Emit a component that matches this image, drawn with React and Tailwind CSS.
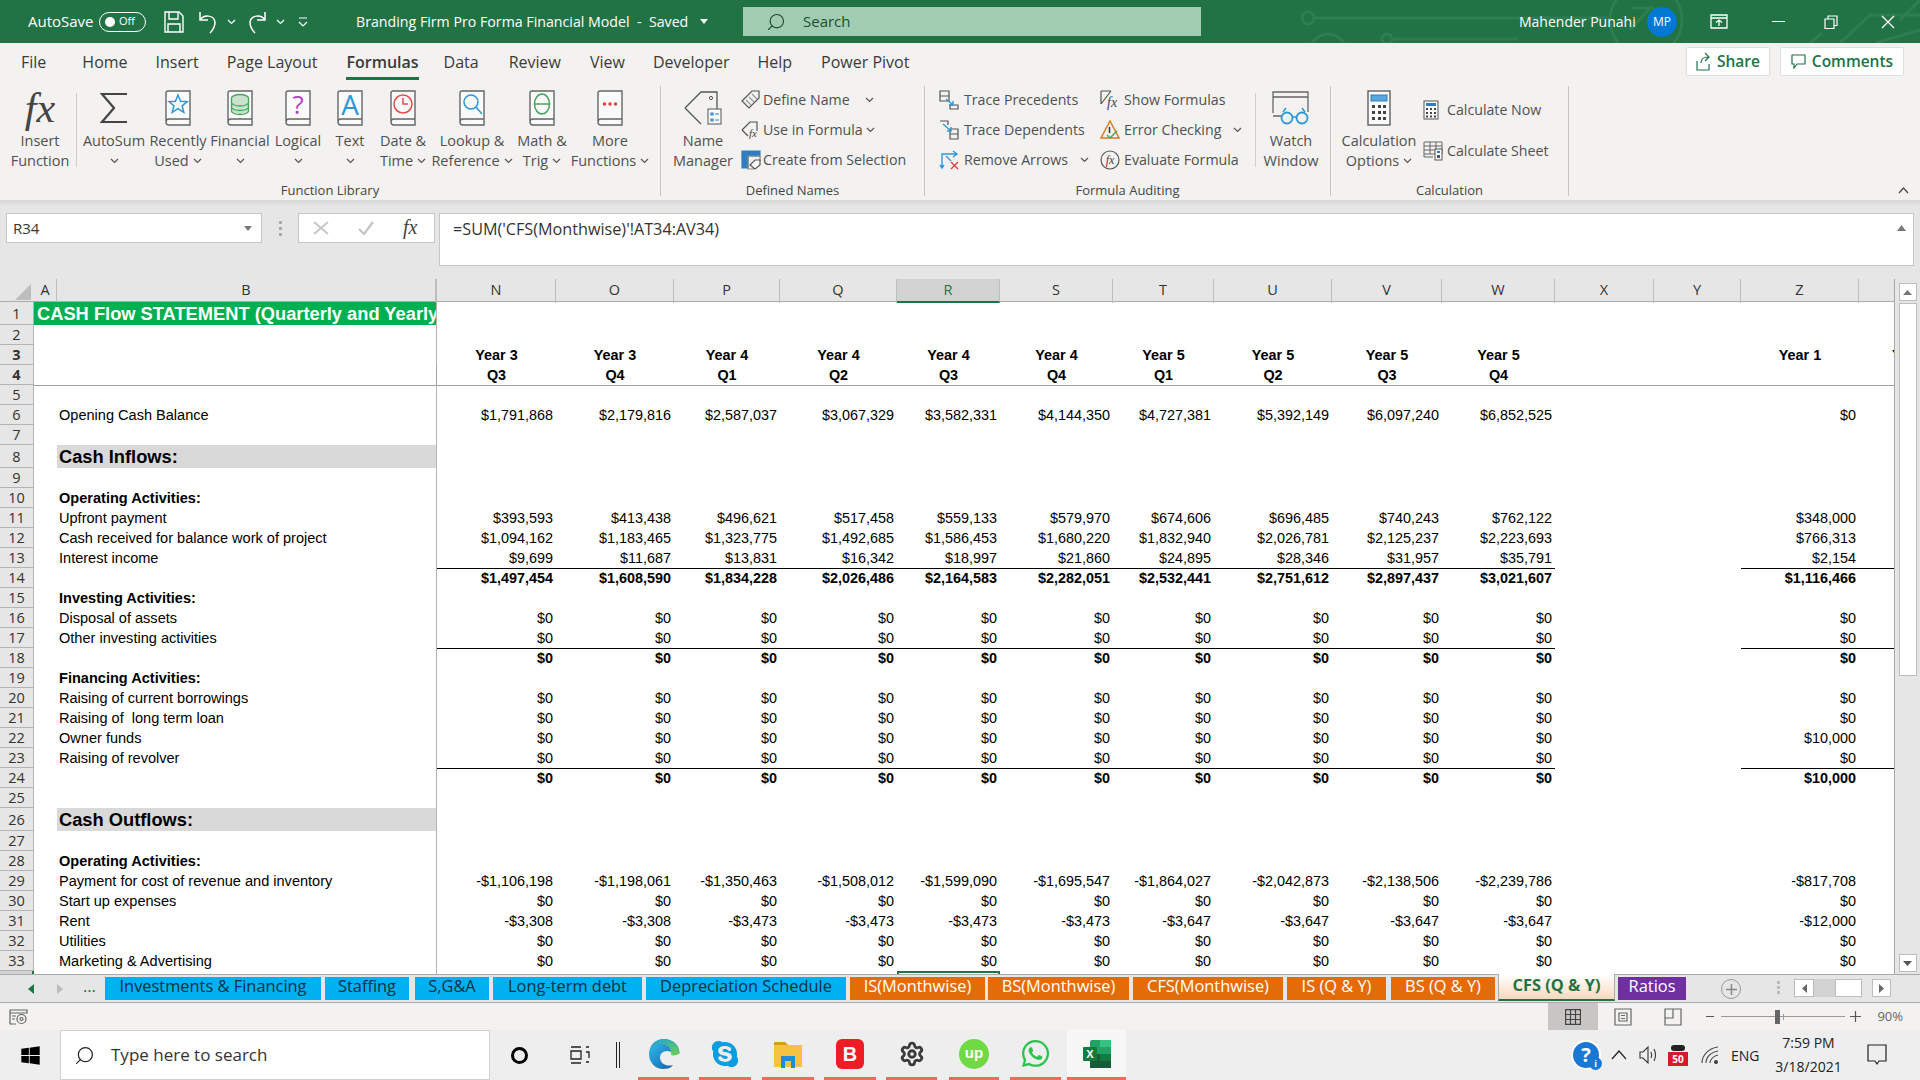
import React from "react";
import { FaWindows, FaWhatsapp, FaSkype } from "react-icons/fa";
import { Search, Settings } from "lucide-react";

const cols =
  "grid grid-cols-[34px_23px_380px_119px_118px_106px_117px_103px_113px_101px_118px_110px_113px_99px_87px_118px_36px]";

const Chev = ({ color = "#555" }) => (
  <svg width="9" height="6" viewBox="0 0 9 6" className="shrink-0">
    <path d="M1 1l3.5 3.5L8 1" fill="none" stroke={color} strokeWidth="1.2" />
  </svg>
);

const Book = ({ children }) => (
  <svg width="28" height="48" viewBox="0 -6 28 48" className="-my-[6px]">
    <path d="M2 31V3a2 2 0 0 1 2-2h22v28H5a3 3 0 0 0 0 6h21v-6" fill="#fafafa" stroke="#666" strokeWidth="1.4" />
    {children}
  </svg>
);

const Fx = ({ size = 36 }) => (
  <span className="font-['Liberation_Serif',serif] italic leading-none text-[#444]" style={{ fontSize: size }}>
    fx
  </span>
);

const LargeButton = ({ w, icon, line1, line2, chev }) => (
  <div className={`flex shrink-0 flex-col items-center ${w}`}>
    <div className="flex h-[36px] shrink-0 items-center justify-center">{icon}</div>
    <div className="mt-[5px] h-[20px] shrink-0 whitespace-nowrap leading-[20px]">{line1}</div>
    <div className="flex h-[20px] shrink-0 items-center gap-[4px] whitespace-nowrap leading-[20px]">
      {line2}
      {chev && <Chev />}
    </div>
  </div>
);

const SmallButton = ({ icon, iconW, text, textW, chev, h = "h-[30px]" }) => (
  <div className={`flex items-center whitespace-nowrap text-[14.2px] ${h}`}>
    <div className={`flex shrink-0 items-center ${iconW}`}>{icon}</div>
    <div className={textW}>{text}</div>
    {chev && <Chev />}
  </div>
);

const Group = ({ w, label, children }) => (
  <div className={`mt-[6px] flex h-[110px] shrink-0 flex-col border-r border-[#c8c6c4] ${w}`}>
    <div className="flex h-[98px] pt-[4px]">{children}</div>
    <div className="h-[12px] text-center text-[13px] leading-[12px] text-[#444]">{label}</div>
  </div>
);

const Sep = () => <div className="mt-[3px] h-[74px] w-[1px] shrink-0 bg-[#d0cecc]"></div>;

const TitleBar = () => (
  <div className="relative flex h-[43px] shrink-0 items-center overflow-hidden bg-[#217346] text-white">
    <svg width="640" height="43" viewBox="0 0 640 43" className="absolute left-[1280px] top-0" fill="none" stroke="#2d7f52" strokeWidth="3">
      <circle cx="28" cy="18" r="6" />
      <path d="M34 18H330" />
      <circle cx="107" cy="39" r="5" />
      <path d="M112 39H238" />
      <circle cx="48" cy="52" r="18" />
      <circle cx="366" cy="20" r="36" />
      <path d="M350 30l20-22M352 8h22" />
      <path d="M640 30L596 43M560 43l30-28h50M640 0l-20 20M530 43l12-10" />
    </svg>
    <span className="ml-[28px] w-[71px] text-[15px]">AutoSave</span>
    <div className="flex h-[20px] w-[47px] items-center rounded-full border border-white pl-[5px] pr-[5px]">
      <div className="h-[10px] w-[10px] rounded-full bg-white"></div>
      <span className="ml-[4px] text-[11px]">Off</span>
    </div>
    <svg width="20" height="22" viewBox="0 0 20 22" className="ml-[18px]" fill="none" stroke="white" strokeWidth="1.4">
      <path d="M1 1h14l4 4v16H1zM5 1v7h9V1M4 21v-8h12v8" />
    </svg>
    <svg width="20" height="24" viewBox="0 0 20 24" className="ml-[14px]" fill="none" stroke="white" strokeWidth="1.5">
      <path d="M2 2v8h8M2 10c4-6 14-5 15 2 0 5-2 8-5 11" />
    </svg>
    <div className="ml-[9px]"><Chev color="#fff" /></div>
    <svg width="20" height="24" viewBox="0 0 20 24" className="ml-[11px]" fill="none" stroke="white" strokeWidth="1.5">
      <path d="M18 2v8h-8M18 10C14 4 4 5 3 12c0 5 2 8 5 11" />
    </svg>
    <div className="ml-[9px]"><Chev color="#fff" /></div>
    <svg width="10" height="12" viewBox="0 0 10 12" className="ml-[13px]" fill="none" stroke="white" strokeWidth="1.2">
      <path d="M1 2h8M1 6l4 4 4-4" />
    </svg>
    <span className="ml-[48px] w-[338px] whitespace-nowrap text-[14.2px]">Branding Firm Pro Forma Financial Model&nbsp; -&nbsp; Saved</span>
    <svg width="8" height="5" viewBox="0 0 8 5" className="ml-[6px]"><path d="M0 0h8L4 5z" fill="white" /></svg>
    <div className="ml-[35px] flex h-[29px] w-[458px] items-center bg-[#a0cdb1] text-[#1e4d33]">
      <Search size={20} strokeWidth={1.4} className="ml-[23px] -scale-x-100" />
      <span className="ml-[17px] text-[15px]">Search</span>
    </div>
    <span className="relative ml-[318px] w-[128px] whitespace-nowrap text-[14px]">Mahender Punahi</span>
    <div className="relative flex h-[30px] w-[30px] items-center justify-center rounded-full bg-[#0078d4] text-[12px]">MP</div>
    <svg width="18" height="15" viewBox="0 0 18 15" className="relative ml-[33px]" fill="none" stroke="white" strokeWidth="1.3">
      <path d="M1 1h16v13H1zM1 4h16M9 12V6M6 8.5L9 6l3 2.5" />
    </svg>
    <div className="relative ml-[44px] h-[1.5px] w-[13px] bg-white"></div>
    <svg width="14" height="14" viewBox="0 0 14 14" className="relative ml-[39px]" fill="none" stroke="white" strokeWidth="1.2">
      <path d="M1 4h9v9.5H1zM4 4V1h9v9.5h-3" />
    </svg>
    <svg width="14" height="14" viewBox="0 0 14 14" className="relative ml-[43px]" fill="none" stroke="white" strokeWidth="1.3">
      <path d="M1 1l12 12M13 1L1 13" />
    </svg>
  </div>
);

const tabs = [
  ["File", "ml-[21px]"],
  ["Home", "ml-[36px]"],
  ["Insert", "ml-[28px]"],
  ["Page Layout", "ml-[28px]"],
  ["Data", "ml-[25px]"],
  ["Review", "ml-[30px]"],
  ["View", "ml-[29px]"],
  ["Developer", "ml-[28px]"],
  ["Help", "ml-[28px]"],
  ["Power Pivot", "ml-[29px]"],
];

const RibbonTabs = () => (
  <div className="flex h-[37px] shrink-0 items-center bg-[#f3f2f1] text-[16px] text-[#3b3a39]">
    {tabs.slice(0, 4).map((t) => (
      <span key={t[0]} className={t[1]}>{t[0]}</span>
    ))}
    <div className="ml-[29px] flex h-[37px] flex-col items-center justify-center border-b-[3px] border-[#217346] pt-[3px] font-semibold">
      <span className="text-[#3b3a39]">Formulas</span>
    </div>
    {tabs.slice(4).map((t) => (
      <span key={t[0]} className={t[1]}>{t[0]}</span>
    ))}
    <div className="ml-auto flex h-[29px] w-[84px] items-center justify-center gap-[6px] rounded-[2px] border border-[#e1dfdd] bg-white text-[15.5px] font-semibold text-[#217346]">
      <svg width="15" height="19" viewBox="0 0 15 19" fill="none" stroke="#217346" strokeWidth="1.2">
        <path d="M1 9v9h12v-6M5 11c0-4 3-6 7-6M9 1l4 4-4 4" />
      </svg>
      Share
    </div>
    <div className="ml-[10px] mr-[16px] flex h-[29px] w-[124px] items-center justify-center gap-[6px] rounded-[2px] border border-[#e1dfdd] bg-white text-[15.5px] font-semibold text-[#217346]">
      <svg width="15" height="15" viewBox="0 0 15 15" fill="none" stroke="#217346" strokeWidth="1.2">
        <path d="M1 1h13v9H6l-3 4v-4H1z" />
      </svg>
      Comments
    </div>
  </div>
);

const SmallBox = ({ children, w = 20 }) => (
  <svg width={w} height="20" viewBox={`0 0 ${w} 20`} fill="none" strokeWidth="1.2">
    {children}
  </svg>
);

const Ribbon = () => (
  <div className="relative flex h-[120px] shrink-0 bg-[#f3f2f1] text-[14.5px] text-[#505050]">
    <Group w="w-[661px]" label="Function Library">
      <div className="flex w-[76px] shrink-0 flex-col items-center pl-[4px]">
        <div className="flex h-[36px] shrink-0 items-center"><Fx size={42} /></div>
        <div className="mt-[5px] h-[20px] shrink-0 leading-[20px]">Insert</div>
        <div className="h-[20px] shrink-0 leading-[20px]">Function</div>
      </div>
      <Sep />
      <LargeButton
        w="w-[74px]"
        icon={
          <svg width="30" height="32" viewBox="0 0 30 32" fill="none" stroke="#444" strokeWidth="2.2">
            <path d="M28 2H3l12 14L3 30h25" />
          </svg>
        }
        line1="AutoSum"
        chev
      />
      <LargeButton
        w="w-[54px]"
        icon={
          <Book>
            <path d="M14 5l2.6 6.2 6.6.4-5.1 4.2 1.7 6.5-5.8-3.6-5.8 3.6 1.7-6.5L5 11.6l6.4-.4z" fill="none" stroke="#2f96d8" strokeWidth="1.5" />
          </Book>
        }
        line1="Recently"
        line2="Used"
        chev
      />
      <LargeButton
        w="w-[70px]"
        icon={
          <Book>
            <g fill="#c9e3cc" stroke="#47a35c" strokeWidth="1.3">
              <ellipse cx="14" cy="8" rx="8.5" ry="3.5" />
              <path d="M5.5 8v13c0 2 3.8 3.5 8.5 3.5s8.5-1.5 8.5-3.5V8" />
              <path d="M5.5 12.5c0 2 3.8 3.5 8.5 3.5s8.5-1.5 8.5-3.5M5.5 17c0 2 3.8 3.5 8.5 3.5s8.5-1.5 8.5-3.5" fill="none" />
            </g>
          </Book>
        }
        line1="Financial"
        chev
      />
      <LargeButton
        w="w-[46px]"
        icon={
          <Book>
            <text x="14" y="24" textAnchor="middle" fontSize="26" fill="#b146c2" fontFamily="Open Sans">?</text>
          </Book>
        }
        line1="Logical"
        chev
      />
      <LargeButton
        w="w-[58px]"
        icon={
          <Book>
            <text x="14" y="25" textAnchor="middle" fontSize="28" fill="#2f96d8" fontFamily="Open Sans">A</text>
          </Book>
        }
        line1="Text"
        chev
      />
      <LargeButton
        w="w-[48px]"
        icon={
          <Book>
            <circle cx="14" cy="14" r="9" fill="none" stroke="#ea4a4a" strokeWidth="1.5" />
            <path d="M14 8v6h5" fill="none" stroke="#ea4a4a" strokeWidth="1.5" />
          </Book>
        }
        line1="Date &"
        line2="Time"
        chev
      />
      <LargeButton
        w="w-[90px]"
        icon={
          <Book>
            <circle cx="13" cy="12" r="7" fill="none" stroke="#2f96d8" strokeWidth="1.5" />
            <path d="M18 17l6 7" stroke="#2f96d8" strokeWidth="1.5" />
          </Book>
        }
        line1="Lookup &"
        line2="Reference"
        chev
      />
      <LargeButton
        w="w-[50px]"
        icon={
          <Book>
            <ellipse cx="14" cy="14" rx="7.5" ry="10" fill="none" stroke="#47a35c" strokeWidth="1.5" />
            <path d="M6.5 14h15" stroke="#47a35c" strokeWidth="1.5" />
          </Book>
        }
        line1="Math &"
        line2="Trig"
        chev
      />
      <LargeButton
        w="w-[86px]"
        icon={
          <Book>
            <circle cx="8.5" cy="14" r="1.7" fill="#ea3a3a" />
            <circle cx="14" cy="14" r="1.7" fill="#ea3a3a" />
            <circle cx="19.5" cy="14" r="1.7" fill="#ea3a3a" />
          </Book>
        }
        line1="More"
        line2="Functions"
        chev
      />
    </Group>

    <Group w="w-[264px]" label="Defined Names">
      <div className="pl-[4px]">
        <LargeButton
          w="w-[76px]"
          icon={
            <svg width="38" height="36" viewBox="0 0 38 36" fill="none">
              <path d="M1 18L17 2h16v20M17 34L1 18" stroke="#555" strokeWidth="1.3" />
              <circle cx="27" cy="8" r="1.6" stroke="#555" />
              <rect x="24" y="19" width="13" height="15" fill="#fafafa" stroke="#555" />
              <path d="M27 23h2v2h-2zM27 29h2v2h-2zM31 24h4M31 30h4" stroke="#2f7ec2" strokeWidth="1.2" />
            </svg>
          }
          line1="Name"
          line2="Manager"
        />
      </div>
      <div className="-mt-[5px] flex flex-col">
        <SmallButton
          iconW="w-[22px]"
          textW="w-[102px]"
          chev
          text="Define Name"
          icon={
            <SmallBox>
              <path d="M1 11L11 1h7v7L8 18z" stroke="#555" />
              <path d="M5 10l5 5M8 7l5 5M11 4l5 5" stroke="#999" />
            </SmallBox>
          }
        />
        <SmallButton
          iconW="w-[22px]"
          textW="w-[103px]"
          chev
          text="Use in Formula"
          icon={
            <SmallBox>
              <path d="M1 10l8-8h7v9" stroke="#555" />
              <path d="M1 10l6 6" stroke="#555" />
              <text x="8" y="17" fontSize="11" fontStyle="italic" fontFamily="Liberation Serif" fill="#444" stroke="none">fx</text>
            </SmallBox>
          }
        />
        <SmallButton
          iconW="w-[22px]"
          textW=""
          text="Create from Selection"
          icon={
            <SmallBox>
              <path d="M1 1h18v5H1z" fill="#2f7ec2" stroke="#2f7ec2" />
              <path d="M1 6h6v12H1z" fill="#2f7ec2" stroke="#2f7ec2" />
              <path d="M7 6h12v5l-7 8H7z" stroke="#888" />
              <path d="M9 15l5-5h5v5l-5 4z" fill="#fafafa" stroke="#555" />
            </SmallBox>
          }
        />
      </div>
    </Group>

    <Group w="w-[406px]" label="Formula Auditing">
      <div className="-mt-[5px] flex w-[175px] shrink-0 flex-col pl-[14px]">
        <SmallButton
          iconW="w-[25px]"
          textW=""
          text="Trace Precedents"
          icon={
            <SmallBox>
              <path d="M1 1h9v5H1zM1 6h9v5H1zM11 15h8v4h-8z" stroke="#555" />
              <path d="M7 9l7 6M14 11v4h-4" stroke="#2f96d8" strokeWidth="1.4" />
            </SmallBox>
          }
        />
        <SmallButton
          iconW="w-[25px]"
          textW=""
          text="Trace Dependents"
          icon={
            <SmallBox>
              <path d="M1 1h8v4M11 9h8v5h-8zM11 14h8v5h-8z" stroke="#555" />
              <path d="M4 4l8 7M12 7v4H8" stroke="#2f96d8" strokeWidth="1.4" />
            </SmallBox>
          }
        />
        <SmallButton
          iconW="w-[25px]"
          textW="w-[116px]"
          chev
          text="Remove Arrows"
          icon={
            <SmallBox>
              <path d="M3 18V4h14M1 15l2 3 2-3M14 1l4 3-4 3M7 6l5 5" stroke="#2f96d8" strokeWidth="1.4" />
              <path d="M12 12l7 7M19 12l-7 7" stroke="#e63a3a" strokeWidth="1.3" />
            </SmallBox>
          }
        />
      </div>
      <div className="-mt-[5px] flex w-[155px] shrink-0 flex-col">
        <SmallButton
          iconW="w-[24px]"
          textW=""
          text="Show Formulas"
          icon={
            <SmallBox w={22}>
              <path d="M1 1h10M1 1v13M1 14L11 1" stroke="#555" />
              <text x="7" y="17" fontSize="14" fontStyle="italic" fontFamily="Liberation Serif" fill="#444" stroke="none">fx</text>
            </SmallBox>
          }
        />
        <SmallButton
          iconW="w-[24px]"
          textW="w-[109px]"
          chev
          text="Error Checking"
          icon={
            <SmallBox>
              <path d="M10 1L1 18h18z" stroke="#e07a1f" strokeWidth="1.5" />
              <path d="M9.5 7v6" stroke="#333" strokeWidth="1.5" />
              <path d="M7 15l3 3 7-7" stroke="#47a35c" strokeWidth="1.5" />
            </SmallBox>
          }
        />
        <SmallButton
          iconW="w-[24px]"
          textW=""
          text="Evaluate Formula"
          icon={
            <SmallBox>
              <circle cx="10" cy="10" r="9" stroke="#555" />
              <text x="10" y="14" textAnchor="middle" fontSize="12" fontStyle="italic" fontFamily="Liberation Serif" fill="#444" stroke="none">fx</text>
            </SmallBox>
          }
        />
      </div>
      <Sep />
      <LargeButton
        w="w-[70px]"
        icon={
          <svg width="38" height="34" viewBox="0 0 38 34" fill="none">
            <path d="M1 22V1h35v20M1 6h35M1 25h9" stroke="#666" strokeWidth="1.3" />
            <circle cx="15" cy="27" r="5.5" stroke="#2f96d8" strokeWidth="1.8" />
            <circle cx="30" cy="27" r="5.5" stroke="#2f96d8" strokeWidth="1.8" />
            <path d="M20 26h5M11 21l3-4M33 21l-3-4" stroke="#2f96d8" strokeWidth="1.5" />
          </svg>
        }
        line1="Watch"
        line2="Window"
      />
    </Group>

    <Group w="w-[238px]" label="Calculation">
      <LargeButton
        w="w-[96px]"
        icon={
          <svg width="24" height="36" viewBox="0 0 24 36" fill="none">
            <rect x="1" y="1" width="22" height="34" fill="#fafafa" stroke="#555" strokeWidth="1.3" />
            <rect x="4" y="5" width="16" height="6" fill="#5aa5dc" stroke="#2f7ec2" />
            <path d="M5 15h3v3H5zM11 15h3v3h-3zM16 15h3v3h-3zM5 21h3v3H5zM11 21h3v3h-3zM16 21h3v3h-3zM5 27h3v3H5zM11 27h3v3h-3zM16 27h3v3h-3z" fill="#444" />
          </svg>
        }
        line1="Calculation"
        line2="Options"
        chev
      />
      <div className="-ml-[4px] flex flex-col">
        <SmallButton
          h="h-[40px]"
          iconW="w-[24px]"
          textW=""
          text="Calculate Now"
          icon={
            <svg width="16" height="20" viewBox="0 0 16 20" fill="none">
              <rect x="1" y="1" width="14" height="18" fill="#fafafa" stroke="#555" />
              <rect x="3" y="3" width="10" height="3" fill="#2f7ec2" />
              <path d="M3 8h2v2H3zM7 8h2v2H7zM11 8h2v2h-2zM3 12h2v2H3zM7 12h2v2H7zM11 12h2v2h-2zM3 15.500h2v2H3zM7 15.500h2v2H7zM11 15.500h2v2h-2z" fill="#444" />
            </svg>
          }
        />
        <SmallButton
          h="h-[41px]"
          iconW="w-[24px]"
          textW=""
          text="Calculate Sheet"
          icon={
            <svg width="20" height="20" viewBox="0 0 20 20" fill="none">
              <path d="M1 1h18v12H1zM1 5h18M1 9h18M7 1v12M13 1v12M1 13v3h9" stroke="#666" />
              <rect x="12" y="8" width="7" height="11" fill="#fafafa" stroke="#555" />
              <rect x="14" y="10" width="3" height="2" fill="#2f7ec2" />
              <path d="M14 14h3v3h-3z" fill="#555" />
            </svg>
          }
        />
      </div>
    </Group>
    <svg width="11" height="7" viewBox="0 0 11 7" className="absolute bottom-[6px] right-[11px]" fill="none" stroke="#444" strokeWidth="1.2">
      <path d="M1 6l4.500-5L10 6" />
    </svg>
  </div>
);

const FormulaBar = () => (
  <div className="flex h-[79px] shrink-0 items-start bg-[#e6e6e6] bg-gradient-to-b from-[#d6d6d6] from-0% to-[#e6e6e6] to-[8%] pt-[13px] text-[15px] text-[#333]">
    <div className="ml-[6px] flex h-[30px] w-[256px] items-center justify-between border border-[#c6c6c6] bg-white pl-[6px] pr-[9px]">
      R34
      <svg width="8" height="5" viewBox="0 0 8 5"><path d="M0 0h8L4 5z" fill="#777" /></svg>
    </div>
    <div className="ml-[17px] flex h-[30px] w-[3px] flex-col items-center justify-center gap-[3px]">
      <div className="h-[3px] w-[3px] bg-[#aaa]"></div>
      <div className="h-[3px] w-[3px] bg-[#aaa]"></div>
      <div className="h-[3px] w-[3px] bg-[#aaa]"></div>
    </div>
    <div className="ml-[16px] flex h-[30px] w-[137px] items-center border border-[#c6c6c6] bg-white">
      <svg width="16" height="14" viewBox="0 0 16 14" className="ml-[14px]" fill="none" stroke="#c4c4c4" strokeWidth="1.8">
        <path d="M1 1l14 12M15 1L1 13" />
      </svg>
      <svg width="16" height="14" viewBox="0 0 16 14" className="ml-[29px]" fill="none" stroke="#c4c4c4" strokeWidth="2.2">
        <path d="M1 8l5 5 9-12" />
      </svg>
      <div className="ml-[29px]"><Fx size={20} /></div>
    </div>
    <div className="relative ml-[4px] flex h-[53px] w-[1475px] items-start border border-[#c6c6c6] bg-white pl-[13px] pt-[3px] text-[16.2px]">
      =SUM('CFS(Monthwise)'!AT34:AV34)
      <svg width="9" height="6" viewBox="0 0 9 6" className="absolute right-[7px] top-[11px]"><path d="M0 6l4.500-6L9 6z" fill="#777" /></svg>
    </div>
  </div>
);

const colNames = ["A", "B", "N", "O", "P", "Q", "R", "S", "T", "U", "V", "W", "X", "Y", "Z", ""];
const years = ["Year 3", "Year 3", "Year 4", "Year 4", "Year 4", "Year 4", "Year 5", "Year 5", "Year 5", "Year 5"];
const quarters = ["Q3", "Q4", "Q1", "Q2", "Q3", "Q4", "Q1", "Q2", "Q3", "Q4"];

const ColumnHeader = () => (
  <div className={`${cols} h-[23px] border-b border-[#ababab] bg-[#e6e6e6] font-['Open_Sans',sans-serif] text-[14.5px] text-[#333]`}>
    <div className="flex items-end justify-end pb-[3px] pr-[3px]">
      <svg width="16" height="16" viewBox="0 0 16 16"><path d="M16 0v16H0z" fill="#bdbdbd" /></svg>
    </div>
    {colNames.map((c, i) => (
      <div
        key={i}
        className={
          c === "R"
            ? "border-b-2 border-r border-[#217346] border-r-[#bdbdbd] bg-[#d2d2d2] text-center leading-[22px] text-[#217346]"
            : c === "B"
            ? "border-r-2 border-[#bdbdbd] text-center leading-[22px]"
            : "border-r border-[#bdbdbd] text-center leading-[22px]"
        }
      >
        {c}
      </div>
    ))}
  </div>
);

const Num = ({ n, h, active }) => (
  <div
    className={`font-['Open_Sans',sans-serif] text-center text-[14.5px] ${h} ${
      active
        ? "border-r-2 border-[#217346] bg-[#d2d2d2] text-[#217346]"
        : "border-b border-r border-[#b4b4b4] bg-[#e6e6e6] text-[#333]"
    }`}
  >
    {n}
  </div>
);

const Row = ({ n, label, bold, vals, z, total, zTotal }) => {
  const weight = bold ? "font-bold" : "";
  const cell = `flex h-[20px] items-center justify-end overflow-hidden whitespace-nowrap pr-[3px] ${weight}`;
  const line = total ? "border-t border-black pb-[2px]" : "";
  return (
    <div className={`${cols} h-[20px] leading-[20px]`}>
      <Num n={n} h="h-[20px] leading-[20px]" />
      <div></div>
      <div className={`flex h-[20px] items-center overflow-hidden whitespace-pre border-r border-[#b4b4b4] pl-[2px] text-[14.55px] ${weight}`}>{label}</div>
      {(vals || Array(10).fill("")).map((v, i) => (
        <div key={i} className={`${cell} ${line}`}>{v}</div>
      ))}
      <div></div>
      <div></div>
      <div className={`${cell} ${zTotal ? "border-t border-black pb-[2px]" : ""}`}>{z}</div>
      <div className={zTotal ? "border-t border-black" : ""}></div>
    </div>
  );
};

const Band = ({ n, label }) => (
  <div className={`${cols} h-[23px]`}>
    <Num n={n} h="h-[23px] leading-[23px]" />
    <div></div>
    <div className="flex h-[23px] items-center border-r border-[#b4b4b4] bg-[#d9d9d9] pl-[2px] text-[18.3px] font-bold">{label}</div>
  </div>
);

const zeros = Array(10).fill("$0");

const SheetRows = () => (
  <div className="font-['Liberation_Sans',Arial,sans-serif] text-[14.4px] text-black">
    <div className={`${cols} h-[23px]`}>
      <Num n={1} h="h-[23px] leading-[23px]" />
      <div className="col-span-2 flex items-center overflow-hidden whitespace-nowrap border-r border-[#b4b4b4] bg-[#00b050] pl-[3px] text-[18.3px] font-bold text-white">
        CASH Flow STATEMENT (Quarterly and Yearly)
      </div>
    </div>
    <Row n={2} />
    <div className={`${cols} h-[20px] font-bold`}>
      <Num n={3} h="h-[20px] leading-[20px]" />
      <div></div>
      <div className="border-r border-[#b4b4b4]"></div>
      {years.map((y, i) => (
        <div key={i} className="text-center leading-[20px]">{y}</div>
      ))}
      <div></div>
      <div></div>
      <div className="text-center leading-[20px]">Year 1</div>
      <div className="overflow-hidden whitespace-nowrap pl-[33px] leading-[20px]">Year 2</div>
    </div>
    <div className={`${cols} h-[20px] font-bold`}>
      <Num n={4} h="h-[20px] leading-[20px]" />
      <div className="border-b border-[#a0a0a0]"></div>
      <div className="border-b border-r border-[#a0a0a0]"></div>
      {quarters.map((q, i) => (
        <div key={i} className="border-b border-[#a0a0a0] text-center leading-[20px]">{q}</div>
      ))}
      <div className="border-b border-[#a0a0a0]"></div>
      <div className="border-b border-[#a0a0a0]"></div>
      <div className="border-b border-[#a0a0a0]"></div>
      <div className="border-b border-[#a0a0a0]"></div>
    </div>
    <Row n={5} />
    <Row
      n={6}
      label="Opening Cash Balance"
      vals={["$1,791,868", "$2,179,816", "$2,587,037", "$3,067,329", "$3,582,331", "$4,144,350", "$4,727,381", "$5,392,149", "$6,097,240", "$6,852,525"]}
      z="$0"
    />
    <Row n={7} />
    <Band n={8} label="Cash Inflows:" />
    <Row n={9} />
    <Row n={10} label="Operating Activities:" bold />
    <Row
      n={11}
      label="Upfront payment"
      vals={["$393,593", "$413,438", "$496,621", "$517,458", "$559,133", "$579,970", "$674,606", "$696,485", "$740,243", "$762,122"]}
      z="$348,000"
    />
    <Row
      n={12}
      label="Cash received for balance work of project"
      vals={["$1,094,162", "$1,183,465", "$1,323,775", "$1,492,685", "$1,586,453", "$1,680,220", "$1,832,940", "$2,026,781", "$2,125,237", "$2,223,693"]}
      z="$766,313"
    />
    <Row
      n={13}
      label="Interest income"
      vals={["$9,699", "$11,687", "$13,831", "$16,342", "$18,997", "$21,860", "$24,895", "$28,346", "$31,957", "$35,791"]}
      z="$2,154"
    />
    <Row
      n={14}
      bold
      total
      zTotal
      vals={["$1,497,454", "$1,608,590", "$1,834,228", "$2,026,486", "$2,164,583", "$2,282,051", "$2,532,441", "$2,751,612", "$2,897,437", "$3,021,607"]}
      z="$1,116,466"
    />
    <Row n={15} label="Investing Activities:" bold />
    <Row n={16} label="Disposal of assets" vals={zeros} z="$0" />
    <Row n={17} label="Other investing activities" vals={zeros} z="$0" />
    <Row n={18} bold total zTotal vals={zeros} z="$0" />
    <Row n={19} label="Financing Activities:" bold />
    <Row n={20} label="Raising of current borrowings" vals={zeros} z="$0" />
    <Row n={21} label="Raising of  long term loan" vals={zeros} z="$0" />
    <Row n={22} label="Owner funds" vals={zeros} z="$10,000" />
    <Row n={23} label="Raising of revolver" vals={zeros} z="$0" />
    <Row n={24} bold total zTotal vals={zeros} z="$10,000" />
    <Row n={25} />
    <Band n={26} label="Cash Outflows:" />
    <Row n={27} />
    <Row n={28} label="Operating Activities:" bold />
    <Row
      n={29}
      label="Payment for cost of revenue and inventory"
      vals={["-$1,106,198", "-$1,198,061", "-$1,350,463", "-$1,508,012", "-$1,599,090", "-$1,695,547", "-$1,864,027", "-$2,042,873", "-$2,138,506", "-$2,239,786"]}
      z="-$817,708"
    />
    <Row n={30} label="Start up expenses" vals={zeros} z="$0" />
    <Row
      n={31}
      label="Rent"
      vals={["-$3,308", "-$3,308", "-$3,473", "-$3,473", "-$3,473", "-$3,473", "-$3,647", "-$3,647", "-$3,647", "-$3,647"]}
      z="-$12,000"
    />
    <Row n={32} label="Utilities" vals={zeros} z="$0" />
    <Row n={33} label="Marketing & Advertising" vals={zeros} z="$0" />
    <div className={`${cols} h-[20px]`}>
      <Num n="" h="h-[20px]" active />
      <div></div>
      <div className="border-r border-[#b4b4b4]"></div>
      <div></div>
      <div></div>
      <div></div>
      <div></div>
      <div className="border-2 border-[#217346]"></div>
    </div>
  </div>
);

const ScrollBar = () => (
  <div className="flex flex-1 flex-col items-center bg-[#e6e6e6] pt-[4px]">
    <div className="flex h-[18px] w-[18px] items-center justify-center border border-[#bdbdbd] bg-white">
      <svg width="9" height="5" viewBox="0 0 9 5"><path d="M0 5l4.500-5L9 5z" fill="#777" /></svg>
    </div>
    <div className="mt-[2px] h-[373px] w-[18px] border border-[#bdbdbd] bg-white"></div>
    <div className="flex-1"></div>
    <div className="mb-[2px] flex h-[18px] w-[18px] items-center justify-center border border-[#bdbdbd] bg-white">
      <svg width="9" height="5" viewBox="0 0 9 5"><path d="M0 0l4.500 5L9 0z" fill="#555" /></svg>
    </div>
  </div>
);

const Sheet = () => (
  <div className="flex h-[695px] shrink-0 overflow-hidden bg-white">
    <div className="w-[1895px] shrink-0 overflow-hidden border-r border-[#a6a6a6]">
      <ColumnHeader />
      <SheetRows />
    </div>
    <ScrollBar />
  </div>
);

const sheets = [
  ["Investments & Financing", "w-[216px] ml-[0px]", "blue"],
  ["Staffing", "w-[84px] ml-[4px]", "blue"],
  ["S,G&A", "w-[74px] ml-[6px]", "blue"],
  ["Long-term debt", "w-[149px] ml-[4px]", "blue"],
  ["Depreciation Schedule", "w-[200px] ml-[4px]", "blue"],
  ["IS(Monthwise)", "w-[135px] ml-[4px]", "orange"],
  ["BS(Monthwise)", "w-[141px] ml-[3px]", "orange"],
  ["CFS(Monthwise)", "w-[150px] ml-[4px]", "orange"],
  ["IS (Q & Y)", "w-[99px] ml-[4px]", "orange"],
  ["BS (Q & Y)", "w-[104px] ml-[5px]", "orange"],
];

const SheetTabs = () => (
  <div className="flex h-[29px] shrink-0 items-start border-y border-[#ababab] bg-[#e6e6e6] text-[16.4px]">
    <svg width="6" height="10" viewBox="0 0 6 10" className="ml-[28px] mt-[9px]"><path d="M6 0v10L0 5z" fill="#217346" /></svg>
    <svg width="6" height="10" viewBox="0 0 6 10" className="ml-[23px] mt-[9px]"><path d="M0 0v10l6-5z" fill="#bbb" /></svg>
    <span className="ml-[20px] mt-[3px] w-[22px] leading-[16px] text-[#217346]">...</span>
    {sheets.map((s) => (
      <div
        key={s[0]}
        className={`mt-[2px] flex h-[23px] items-center justify-center whitespace-nowrap pb-[5px] ${s[1]} ${
          s[2] === "blue" ? "bg-[#00b0f0] text-[#12303f]" : "bg-[#e36c09] text-white"
        }`}
      >
        {s[0]}
      </div>
    ))}
    <div className="-mt-[1px] ml-[3px] flex h-[27px] w-[117px] items-center justify-center whitespace-nowrap border-x border-b-2 border-x-[#ababab] border-b-[#217346] bg-gradient-to-b from-white to-[#f9d9bd] pb-[3px] font-bold text-[#217346]">
      CFS (Q & Y)
    </div>
    <div className="ml-[3px] mt-[2px] flex h-[23px] w-[68px] items-center justify-center bg-[#7030a0] pb-[5px] text-white">Ratios</div>
    <div className="ml-[35px] mt-[4px] flex h-[20px] w-[20px] items-center justify-center rounded-full border border-[#999] text-[#777]">
      <svg width="11" height="11" viewBox="0 0 11 11"><path d="M5.500 0v11M0 5.500h11" stroke="#888" strokeWidth="1.5" /></svg>
    </div>
    <div className="ml-[36px] mt-[6px] flex w-[3px] flex-col gap-[2px]">
      <div className="h-[3px] w-[3px] bg-[#bbb]"></div>
      <div className="h-[3px] w-[3px] bg-[#bbb]"></div>
      <div className="h-[3px] w-[3px] bg-[#bbb]"></div>
    </div>
    <div className="ml-[14px] mt-[4px] flex h-[18px] w-[97px] items-center">
      <div className="flex h-[18px] w-[20px] items-center justify-center border border-[#bdbdbd] bg-white">
        <svg width="5" height="9" viewBox="0 0 5 9"><path d="M5 0v9L0 4.500z" fill="#666" /></svg>
      </div>
      <div className="h-[18px] w-[21px] bg-[#d2d2d2]"></div>
      <div className="h-[18px] w-[27px] border border-[#bdbdbd] bg-white"></div>
      <div className="w-[10px]"></div>
      <div className="flex h-[18px] w-[19px] items-center justify-center border border-[#bdbdbd] bg-white">
        <svg width="5" height="9" viewBox="0 0 5 9"><path d="M0 0v9l5-4.500z" fill="#666" /></svg>
      </div>
    </div>
  </div>
);

const StatusBar = () => (
  <div className="flex h-[27px] shrink-0 items-center bg-[#f3f2f1] text-[#555]">
    <svg width="20" height="16" viewBox="0 0 20 16" className="ml-[9px]" fill="none" stroke="#666" strokeWidth="1.2">
      <path d="M1 1h17v3H1zM1 4v11h6" />
      <path d="M3 7h4M3 10h3" />
      <circle cx="12.500" cy="10" r="4.500" />
      <circle cx="12.500" cy="10" r="1.500" />
    </svg>
    <div className="ml-auto flex h-[27px] w-[50px] items-center justify-center bg-[#c8c6c4]">
      <svg width="16" height="16" viewBox="0 0 16 16" fill="none" stroke="#444" strokeWidth="1.2">
        <path d="M.600.600h14.800v14.800H.600zM.600 5.500h14.800M.600 10.500h14.800M5.500.600v14.800M10.500.600v14.800" />
      </svg>
    </div>
    <svg width="18" height="18" viewBox="0 0 18 18" className="ml-[16px]" fill="none" stroke="#666" strokeWidth="1.2">
      <path d="M1 1h16v16H1zM5 5h8v8H5zM7 7.500h4M7 10.500h4" />
    </svg>
    <svg width="18" height="18" viewBox="0 0 18 18" className="ml-[32px]" fill="none" stroke="#666" strokeWidth="1.2">
      <path d="M1 1h16v16H1zM9 1v9H1" />
    </svg>
    <div className="ml-[24px] h-[1.5px] w-[8px] bg-[#555]"></div>
    <div className="relative ml-[7px] flex h-[14px] w-[124px] items-center">
      <div className="h-[1px] w-full bg-[#999]"></div>
      <div className="absolute left-[54px] top-0 h-[14px] w-[5px] bg-[#666]"></div>
      <div className="absolute left-[62px] top-[4px] h-[6px] w-[1px] bg-[#999]"></div>
    </div>
    <svg width="11" height="11" viewBox="0 0 11 11" className="ml-[5px]"><path d="M5.500 0v11M0 5.500h11" stroke="#555" strokeWidth="1.2" /></svg>
    <span className="ml-[16px] mr-[17px] font-['Open_Sans',sans-serif] text-[13px] text-[#666]">90%</span>
  </div>
);

const TaskApp = ({ w, ml, active, children }) => (
  <div className={`flex h-[50px] flex-col items-center justify-end ${w} ${ml} ${active ? "bg-[#f7f7f7]" : ""}`}>
    <div className="flex flex-1 items-center justify-center">{children}</div>
    <div className="h-[3px] w-full bg-[#f0695a]"></div>
  </div>
);

const Taskbar = () => (
  <div className="flex h-[50px] shrink-0 items-center bg-[#eeeeee] text-[#222]">
    <FaWindows size={21} className="ml-[20px] text-black" />
    <div className="ml-[19px] flex h-[50px] w-[430px] items-center border border-[#d0d0d0] bg-white">
      <Search size={21} strokeWidth={1.4} className="ml-[13px] -scale-x-100 text-[#222]" />
      <span className="ml-[16px] text-[17px] text-[#333]">Type here to search</span>
    </div>
    <div className="ml-[21px] h-[17px] w-[17px] rounded-full border-[3px] border-black"></div>
    <svg width="20" height="18" viewBox="0 0 20 18" className="ml-[42px]" fill="none" stroke="#222" strokeWidth="1.3">
      <path d="M1 1h10M1 5h10v8H1zM1 17h10M16 1h3M16 6h3v6M16 16h3" />
    </svg>
    <div className="ml-[26px] flex h-[26px] w-[4px] justify-between border-x border-[#222]"></div>
    <TaskApp w="w-[51px]" ml="ml-[18px]">
      <svg width="32" height="32" viewBox="0 0 32 32">
        <defs>
          <linearGradient id="edgeA" x1="0" y1="0" x2="1" y2="1">
            <stop offset="0" stopColor="#35c1f1" />
            <stop offset="1" stopColor="#0c59a4" />
          </linearGradient>
          <linearGradient id="edgeB" x1="0" y1="0" x2="1" y2="1">
            <stop offset="0" stopColor="#1b9de2" />
            <stop offset="1" stopColor="#6fd34a" />
          </linearGradient>
        </defs>
        <path d="M16 1C7 1 1 8 1 16c0 9 7 15 14 15 4 0 8-1 10-4-6 2-13-1-13-8 0-3 3-6 7-6 5 0 6 3 12 3 1-1 0-3 0-4C30 6 24 1 16 1z" fill="url(#edgeA)" />
        <path d="M16 1C8 1 3 6 2 12c3-5 8-7 13-6 6 1 9 6 8 11 3 1 8 0 8-2C31 7 24 1 16 1z" fill="url(#edgeB)" />
      </svg>
    </TaskApp>
    <TaskApp w="w-[52px]" ml="ml-[10px]">
      <FaSkype size={30} className="text-[#0a9de0]" />
    </TaskApp>
    <TaskApp w="w-[52px]" ml="ml-[11px]">
      <svg width="30" height="28" viewBox="0 0 30 28">
        <path d="M1 2h11l3 3h14v22H1z" fill="#f5c242" />
        <path d="M1 2h11l3 3H1z" fill="#d99b1c" />
        <path d="M8 28V16h14v12h-4v-7h-6v7z" fill="#1c8fd6" />
      </svg>
    </TaskApp>
    <TaskApp w="w-[52px]" ml="ml-[10px]">
      <div className="flex h-[30px] w-[28px] items-center justify-center rounded-[6px] bg-[#ee1c25] font-['Liberation_Sans',sans-serif] text-[20px] font-bold text-white">B</div>
    </TaskApp>
    <TaskApp w="w-[51px]" ml="ml-[10px]">
      <Settings size={26} strokeWidth={2.6} className="text-[#3b3b3b]" />
    </TaskApp>
    <TaskApp w="w-[50px]" ml="ml-[12px]">
      <div className="flex h-[30px] w-[30px] items-center justify-center rounded-full bg-[#6fda44] font-['Liberation_Sans',sans-serif] text-[15px] font-bold text-white">up</div>
    </TaskApp>
    <TaskApp w="w-[51px]" ml="ml-[11px]">
      <FaWhatsapp size={31} className="text-[#29c44f]" />
    </TaskApp>
    <TaskApp w="w-[59px]" ml="ml-[6px]" active>
      <svg width="30" height="30" viewBox="0 0 30 30">
        <rect x="8" y="1" width="21" height="28" rx="2" fill="#21a366" />
        <rect x="18" y="1" width="11" height="7" fill="#33c481" />
        <rect x="18" y="15" width="11" height="7" fill="#107c41" />
        <rect x="8" y="15" width="10" height="14" fill="#185c37" />
        <rect x="18" y="22" width="11" height="7" fill="#185c37" />
        <rect x="1" y="8" width="14" height="14" rx="1" fill="#107c41" />
        <text x="8" y="19" textAnchor="middle" fontSize="11" fontWeight="bold" fill="white" fontFamily="Liberation Sans">X</text>
      </svg>
    </TaskApp>
    <div className="relative ml-[445px] flex h-[30px] w-[30px] items-center justify-center rounded-full border-2 border-white bg-[#1978d4] text-[20px] font-bold text-white">
      ?
      <div className="absolute -bottom-[2px] -right-[3px] flex h-[13px] w-[13px] items-center justify-center rounded-full bg-[#1978d4] text-[9px] leading-none">i</div>
    </div>
    <svg width="16" height="10" viewBox="0 0 16 10" className="ml-[10px]" fill="none" stroke="#222" strokeWidth="1.2">
      <path d="M1 9l7-8 7 8" />
    </svg>
    <svg width="20" height="20" viewBox="0 0 20 20" className="ml-[12px]" fill="none" stroke="#333" strokeWidth="1.1">
      <path d="M1 7h3l5-5v16l-5-5H1zM12 7c1 2 1 4 0 6M15 4c2 4 2 8 0 12" />
    </svg>
    <div className="ml-[9px] flex w-[20px] flex-col items-center">
      <div className="h-[6px] w-[14px] rounded-full bg-[#222]"></div>
      <div className="mt-[1px] flex h-[14px] w-[20px] items-center justify-center bg-[#d8182b] text-[10px] font-bold leading-none text-white">50</div>
    </div>
    <svg width="20" height="20" viewBox="0 0 20 20" className="ml-[12px]" fill="none" stroke="#444" strokeWidth="1.1">
      <path d="M2 18C2 10 9 3 18 2M6 18c0-6 5-11 12-12M10 18c0-3 3-7 8-8" />
      <circle cx="16" cy="17" r="1.500" fill="#444" />
    </svg>
    <span className="ml-[11px] text-[14px]">ENG</span>
    <div className="ml-[13px] flex w-[72px] flex-col items-center text-[14px] leading-[24px]">
      <span>7:59 PM</span>
      <span>3/18/2021</span>
    </div>
    <svg width="20" height="22" viewBox="0 0 20 22" className="ml-[22px]" fill="none" stroke="#222" strokeWidth="1.2">
      <path d="M1 1h18v16h-7l-2 3-2-3H1z" />
    </svg>
  </div>
);

const App = () => {
  return (
    <div className="flex h-[1080px] w-[1920px] flex-col overflow-hidden bg-white font-['Open_Sans',sans-serif]">
      <TitleBar />
      <RibbonTabs />
      <Ribbon />
      <FormulaBar />
      <Sheet />
      <SheetTabs />
      <StatusBar />
      <Taskbar />
    </div>
  );
};

export default App;
